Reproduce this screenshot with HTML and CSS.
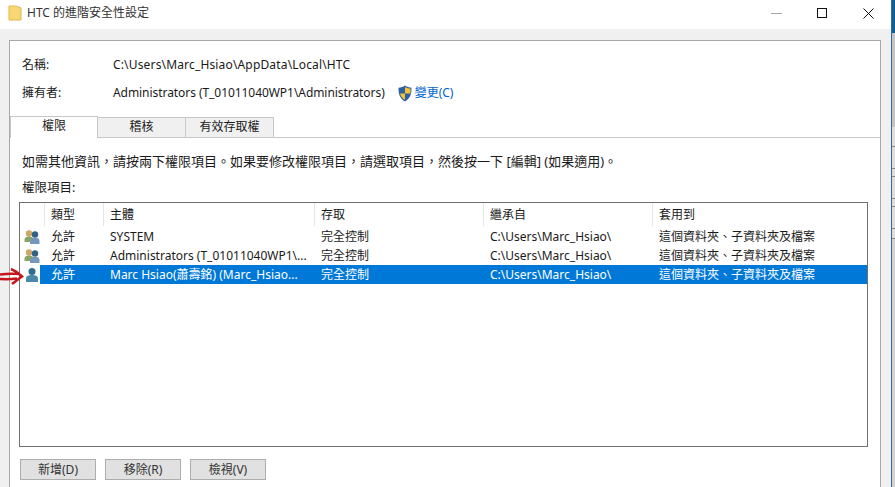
FILE: index.html
```html
<!DOCTYPE html>
<html lang="zh-Hant">
<head>
<meta charset="utf-8">
<title>HTC 的進階安全性設定</title>
<link rel="stylesheet" href="styles.css">
</head>
<body>
<svg class="defs" width="0" height="0" aria-hidden="true">
  <defs>
    <symbol id="group" viewBox="0 0 16 16">
      <circle cx="5" cy="4.500" r="3.200" fill="#cfa768"/>
      <path d="M0.500 13v-2.500C0.500 8.500 2.500 7.500 5 7.500s4.500 1 4.500 3V13z" fill="#8aa65e"/>
      <circle cx="11" cy="5.500" r="3.200" fill="#2f6285"/>
      <path d="M6 15v-3c0-2.300 2.300-3.500 5-3.500s4.500 1.200 4.500 3.500v3z" fill="#7397bd"/>
    </symbol>
  </defs>
</svg>
<div class="window">
  <header class="titlebar">
    <svg class="folder" viewBox="0 0 14 16" width="14" height="16"><path d="M1 1h7l5 2v12H1z" fill="#f8d775" stroke="#e2b84f" stroke-width="1"/></svg>
    <span class="title">HTC 的進階安全性設定</span>
    <div class="controls">
      <svg width="11" height="11" viewBox="0 0 11 11"><path d="M0 5.500h11" stroke="#a8a8a8"/></svg>
      <svg width="11" height="11" viewBox="0 0 11 11"><rect x="0.500" y="0.500" width="9" height="9" fill="none" stroke="#111"/></svg>
      <svg width="11" height="11" viewBox="0 0 11 11"><path d="M0.500 0.500l10 10M10.500 0.500l-10 10" stroke="#111"/></svg>
    </div>
  </header>
  <main class="panel">
    <div class="meta">
      <div class="meta-row"><span class="meta-label">名稱:</span><span class="path-text">C:\Users\Marc_Hsiao\AppData\Local\HTC</span></div>
      <div class="meta-row"><span class="meta-label">擁有者:</span><span class="owner-text">Administrators (T_01011040WP1\Administrators)</span>
        <svg class="shield" viewBox="0 0 16 17" width="16" height="17">
          <path d="M8 0.500c2 1.500 4 2 6.500 2.200 0 6-1 10.500-6.500 13.800C2.500 13.200 1.500 8.700 1.500 2.700 4 2.500 6 2 8 0.500z" fill="#2d5fa8"/>
          <path d="M8 2v6.500h5.300c.2-1.500.2-3 .2-4.900C11.400 3.400 9.600 3 8 2z" fill="#f2c230"/>
          <path d="M8 8.500v6.600c-3-2-4.400-4-4.900-6.600z" fill="#f2c230"/>
        </svg>
        <a class="change">變更(C)</a></div>
    </div>
    <nav class="tabs">
      <div class="tab active">權限</div>
      <div class="tab">稽核</div>
      <div class="tab">有效存取權</div>
    </nav>
    <section class="tabbody">
      <p class="hint">如需其他資訊，請按兩下權限項目。如果要修改權限項目，請選取項目，然後按一下 [編輯] (如果適用)。</p>
      <p class="list-label">權限項目:</p>
      <div class="list">
        <div class="row head">
          <span></span><span>類型</span><span>主體</span><span>存取</span><span>繼承自</span><span>套用到</span>
        </div>
        <div class="row item">
          <svg class="who" width="16" height="16"><use href="#group"/></svg><span>允許</span><span>SYSTEM</span><span>完全控制</span><span>C:\Users\Marc_Hsiao\</span><span>這個資料夾、子資料夾及檔案</span>
        </div>
        <div class="row item">
          <svg class="who" width="16" height="16"><use href="#group"/></svg><span>允許</span><span>Administrators (T_01011040WP1\...</span><span>完全控制</span><span>C:\Users\Marc_Hsiao\</span><span>這個資料夾、子資料夾及檔案</span>
        </div>
        <div class="row item selected">
          <svg class="who" width="16" height="16" viewBox="0 0 16 16"><circle cx="8" cy="4.500" r="3.500" fill="#2e6f8e"/><path d="M2 15v-3.500C2 9 4.500 8 8 8s6 1 6 3.500V15z" fill="#4a8aa8"/></svg><span>允許</span><span>Marc Hsiao(蕭壽銘) (Marc_Hsiao...</span><span>完全控制</span><span>C:\Users\Marc_Hsiao\</span><span>這個資料夾、子資料夾及檔案</span>
        </div>
      </div>
      <div class="buttons">
        <button class="btn">新增(D)</button>
        <button class="btn">移除(R)</button>
        <button class="btn">檢視(V)</button>
      </div>
    </section>
  </main>
</div>
<div class="strip"></div>
<svg class="arrow" width="24" height="18" viewBox="0 0 24 18"><path d="M0 6.500c6-.8 12-1 19-.5M0 11c6 .3 11 .3 17-.5M11 1c4 1.500 8 4.500 11 7.500-3 2-6 4.500-10 7.500" fill="none" stroke="#c4161c" stroke-width="2.500"/></svg>
</body>
</html>
```
FILE: styles.css
```css
* { box-sizing: border-box; }
html, body { margin: 0; height: 487px; overflow: hidden; }
body {
  display: flex;
  width: 895px;
  position: relative;
  font: 12px/16px "Noto Sans", "Noto Sans CJK TC", sans-serif;
  color: #1a1a1a;
  background: #f0f0f0;
}
.defs { position: absolute; }
.window { width: 891px; height: 487px; display: flex; flex-direction: column; background: #f0f0f0; }
.strip {
  flex: 1;
  border-left: 1px solid #2f6da8;
  background: linear-gradient(#0f5f98 0 33px, #c4c4c4 33px 127px, #dedede 127px 146px, #8a8a8a 146px 147px, #dedede 147px 168px, #8a8a8a 168px 169px, #dedede 169px 176px, #8a8a8a 176px 177px, #dedede 177px 198px, #8a8a8a 198px 199px, #dedede 199px 206px, #8a8a8a 206px 207px, #dedede 207px 228px, #8a8a8a 228px 229px, #dedede 229px 238px, #8a8a8a 238px 239px, #d2d2d2 239px);
}
.titlebar { height: 29px; flex: none; background: #fff; display: flex; align-items: center; padding: 0 0 3px 8px; }
.folder { margin-right: 5px; }
.title { color: #333; }
.controls { margin-left: auto; display: flex; gap: 35px; padding-right: 17px; }
.panel {
  flex: 1;
  margin: 11px 10px 0 9px;
  background: #fff;
  border: 1px solid #a8a8a8;
  border-bottom: 0;
  display: flex;
  flex-direction: column;
}
.meta { padding: 16px 0 0 12px; height: 75px; display: flex; flex-direction: column; gap: 12px; }
.meta-row { display: flex; align-items: center; height: 16px; }
.meta-label { width: 91px; }
.path-text { letter-spacing: 0.16px; }
.owner-text { letter-spacing: -0.06px; }
.shield { margin: 0 2px 0 12px; }
.change { color: #0066cc; }
.tabs { display: flex; height: 22px; position: relative; z-index: 1; }
.tab {
  width: 88px;
  height: 21px;
  margin-top: 1px;
  background: #f0f0f0;
  border: 1px solid #c8c8c8;
  border-left: 0;
  text-align: center;
  line-height: 18px;
}
.tab.active { height: 22px; margin-top: 0; background: #fff; border-left: 1px solid #c8c8c8; border-bottom: 0; }
.tabbody { flex: 1; border-top: 1px solid #c8c8c8; margin-top: -1px; padding: 15px 12px 0 9px; }
.hint { margin: 0; padding-left: 3px; height: 16px; font-size: 13px; white-space: nowrap; }
.list-label { margin: 11px 0 0; padding-left: 3px; height: 16px; font-size: 12.500px; }
.list { margin-top: 6px; height: 245px; border: 1px solid #707070; background: #fff; }
.row {
  display: grid;
  grid-template-columns: 24px 59px 211px 169px 169px 1fr;
  align-items: center;
}
.row > span { padding-left: 7px; white-space: nowrap; overflow: hidden; }
.head { height: 24px; align-items: start; }
.head > span { height: 23px; line-height: 24px; padding-left: 6px; border-left: 1px solid #e5e5e5; }
.head > span:first-child { border-left: 0; }
.item { height: 19px; }
.who { margin-left: 4px; }
.selected { background: linear-gradient(90deg, #fff 20px, #0078d7 20px); color: #fff; }
.buttons { display: flex; gap: 9px; margin-top: 12px; padding-left: 1px; }
.btn {
  width: 76px;
  height: 21px;
  padding: 0;
  font: inherit;
  color: #333;
  background: #e1e1e1;
  border: 1px solid #adadad;
}
.arrow { position: absolute; left: 0; top: 268px; }
```
